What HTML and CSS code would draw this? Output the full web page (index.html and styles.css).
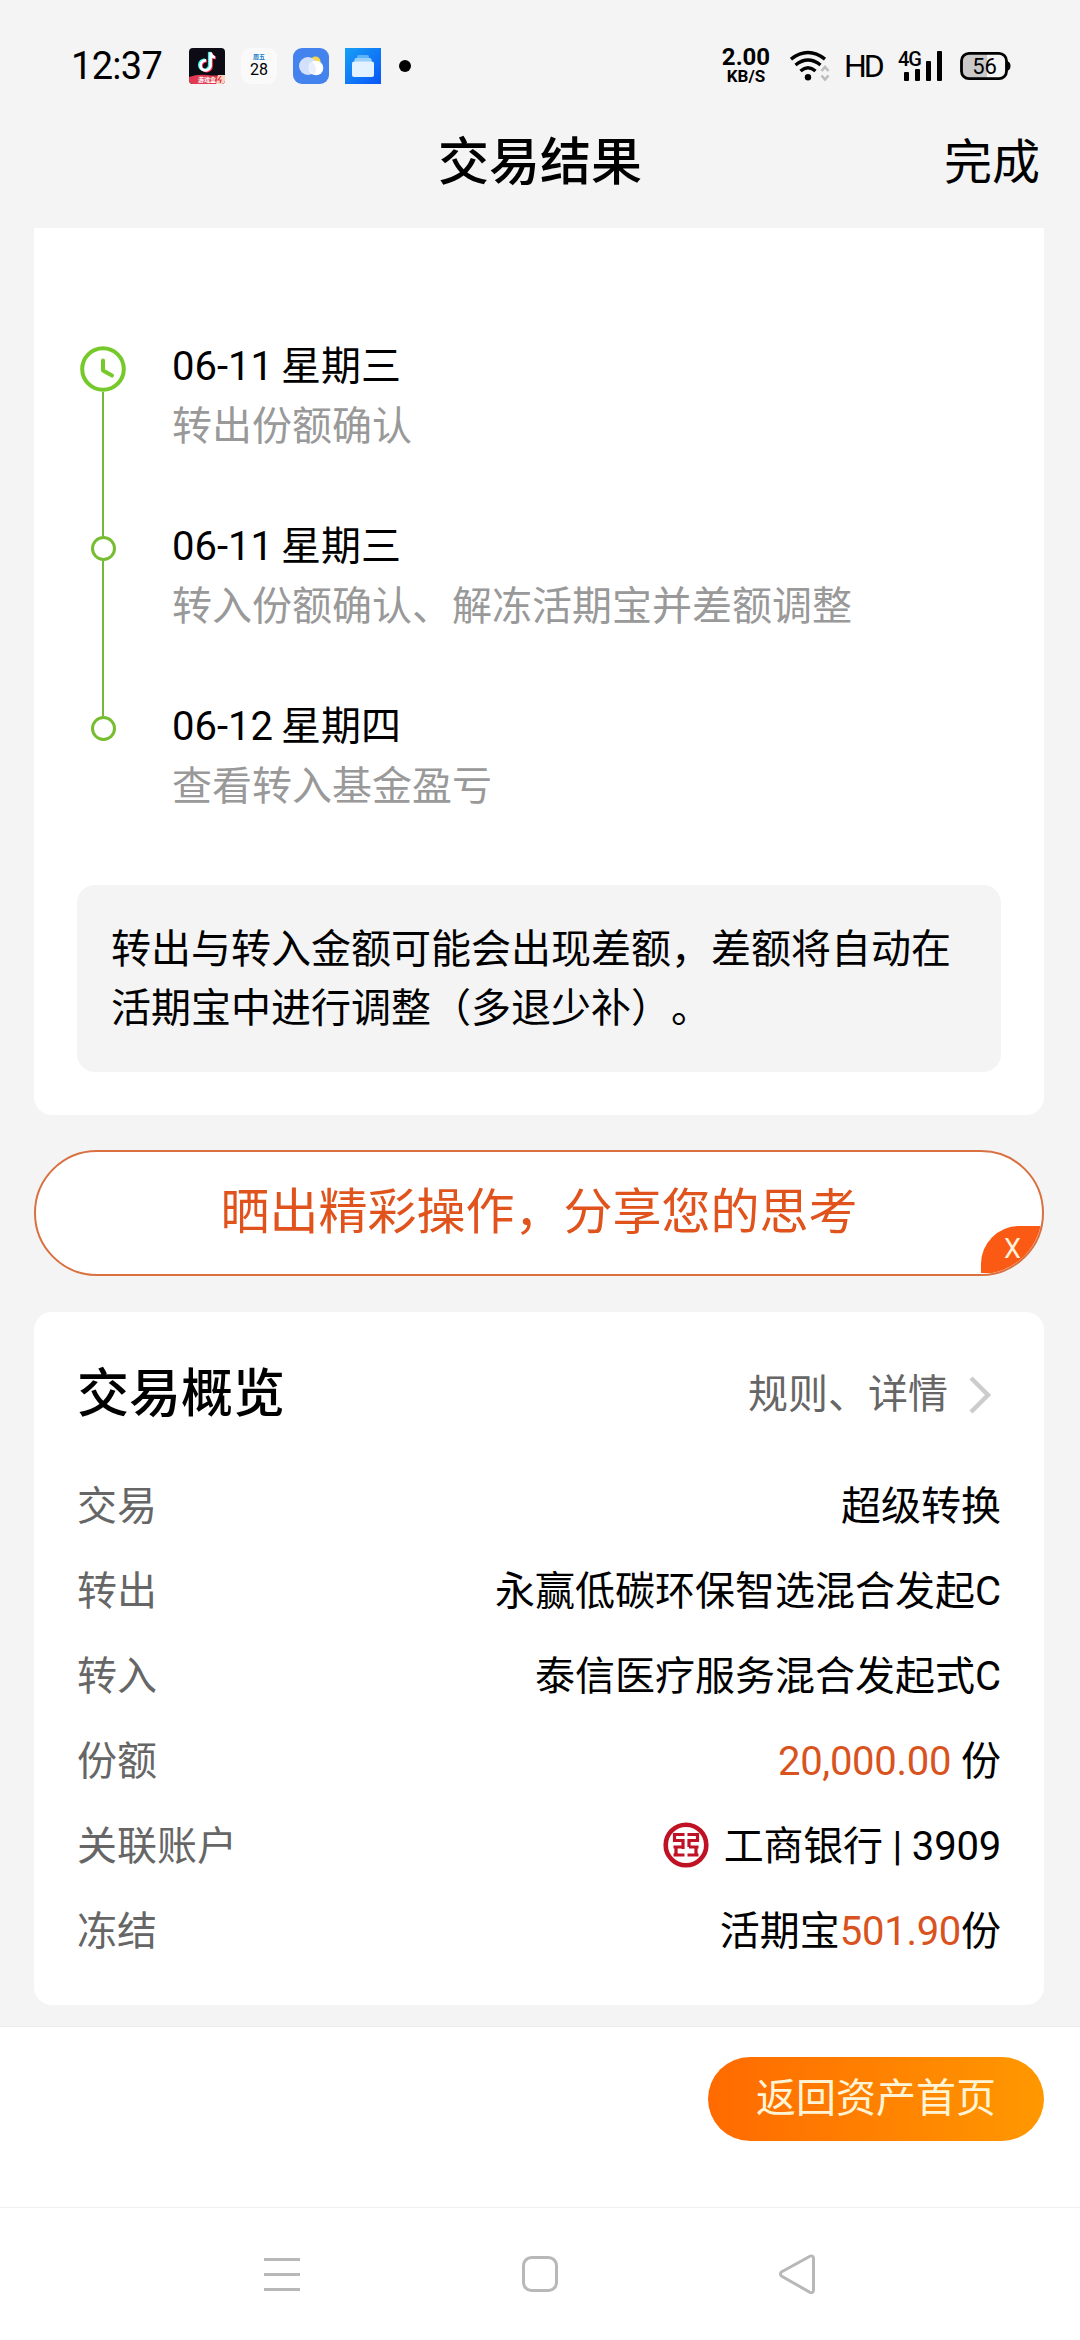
FILE: index.html
```html
<!DOCTYPE html>
<html lang="zh-CN">
<head>
  <meta charset="UTF-8" />
  <meta name="viewport" content="width=device-width, initial-scale=1.0"/>
  <title>交易结果</title>
  <link rel="stylesheet" href="styles.css">
</head>
<body>
  <div class="status-bar">
    <span class="time">12:37</span>
    <div class="app-icons">
      <svg width="36" height="36" viewBox="0 0 36 36">
        <rect width="36" height="36" rx="4" fill="#0d0b14"/>
        <g fill="none" stroke-width="2.8">
          <path d="M17 12.500a5 5 0 1 0 4.500 5V4.500c.4 3 2 4.500 4.500 4.900" stroke="#25f4ee" transform="translate(-1.200 -.6)"/>
          <path d="M17 12.500a5 5 0 1 0 4.500 5V4.500c.4 3 2 4.500 4.500 4.900" stroke="#fe2c55" transform="translate(1 .6)"/>
          <path d="M17 12.500a5 5 0 1 0 4.500 5V4.500c.4 3 2 4.500 4.500 4.900" stroke="#fff"/>
        </g>
        <path d="M0 29Q8 26 18 27T36 27V32a4 4 0 0 1-4 4H4a4 4 0 0 1-4-4z" fill="#e23a50"/>
        <path d="M29 27h7v5a4 4 0 0 1-4 4h-5z" fill="#fbd3c0"/>
        <path d="M32 28l-3 4h3l-1 3" fill="none" stroke="#e2304a" stroke-width="1.200"/>
        <text x="9" y="34" class="tiny-label">游戏盒</text>
      </svg>
      <div class="calendar"><span class="week">周五</span><span class="day">28</span></div>
      <svg width="36" height="36" viewBox="0 0 36 36">
        <rect width="36" height="36" rx="9" fill="#4482ee"/>
        <circle cx="22.500" cy="13.500" r="5" fill="#f7d84a"/>
        <circle cx="15" cy="18" r="9" fill="#d3e0fb"/>
        <circle cx="23" cy="20" r="7.300" fill="#fff"/>
        <path d="M18 13.500a9 9 0 0 1 4 12.500a7.300 7.300 0 0 1-4-12.500z" fill="#e9f0fd"/>
      </svg>
      <svg width="36" height="36" viewBox="0 0 36 36">
        <defs>
          <linearGradient id="folderBg" x1="0" y1="0" x2="1" y2="1">
            <stop offset="0" stop-color="#17a0f5"/><stop offset="1" stop-color="#0a56f8"/>
          </linearGradient>
        </defs>
        <rect width="36" height="36" fill="url(#folderBg)"/>
        <rect x="12" y="7" width="12" height="5" rx="1.500" fill="#5cb4f8"/>
        <rect x="9.500" y="10" width="17" height="6" rx="1.500" fill="#98cffb"/>
        <rect x="7" y="13.500" width="22" height="15.500" rx="2" fill="#e4f1fe"/>
      </svg>
      <span class="dot"></span>
    </div>
    <div class="signals">
      <div class="speed"><span class="speed-num">2.00</span><span class="speed-unit">KB/S</span></div>
      <svg class="wifi" width="40" height="32" viewBox="0 0 40 32">
        <g fill="none" stroke="#000" stroke-width="3.400">
          <path d="M1 9.200Q18 -4 35 9.200"/>
          <path d="M5.500 15Q18 5 30.500 15"/>
          <path d="M10.500 21Q18 14.500 25.500 21"/>
        </g>
        <circle cx="18" cy="27.300" r="3.200"/>
        <path d="M31.500 21l3.500-4 3.500 4M31.500 25.500l3.500 4 3.500-4" fill="none" stroke="#bdbdbd" stroke-width="2.600"/>
      </svg>
      <span class="hd">HD</span>
      <div class="cell">
        <span class="net">4G</span>
        <svg width="46" height="32" viewBox="0 0 46 32">
          <rect x="6" y="22" width="5" height="9" rx="1"/>
          <rect x="17" y="19" width="5" height="12" rx="1"/>
          <rect x="28" y="11" width="5" height="20" rx="1"/>
          <rect x="39" y="1" width="5" height="30" rx="1"/>
        </svg>
      </div>
      <svg class="battery" width="51" height="30" viewBox="0 0 51 30">
        <path d="M9.500 2.500H27V27.500H9.500a7 7 0 0 1-7-7V9.500a7 7 0 0 1 7-7z" fill="#c9c9c9"/>
        <rect x="1.500" y="2.300" width="45" height="25.400" rx="7.500" fill="none" stroke="#000" stroke-width="2.800"/>
        <path d="M47 10q3.500 1 3.500 5t-3.500 5z"/>
        <text x="24.500" y="22.800" class="battery-num">56</text>
      </svg>
    </div>
  </div>

  <header class="header">
    <span></span>
    <h1>交易结果</h1>
    <a class="done">完成</a>
  </header>

  <main class="content">
    <section class="card progress">
      <div class="timeline">
        <div class="rail">
          <svg width="46" height="46" viewBox="0 0 46 46">
            <circle cx="23" cy="23" r="20.800" fill="none" stroke="#76c92b" stroke-width="4"/>
            <path d="M23 14.500V24.500L32 29.500" fill="none" stroke="#76c92b" stroke-width="4" stroke-linecap="round" stroke-linejoin="round"/>
          </svg>
          <span class="line"></span>
          <span class="node"></span>
          <span class="line line-long"></span>
          <span class="node"></span>
        </div>
        <ul class="steps">
          <li><p class="date">06-11 星期三</p><p class="desc">转出份额确认</p></li>
          <li><p class="date">06-11 星期三</p><p class="desc">转入份额确认、解冻活期宝并差额调整</p></li>
          <li><p class="date">06-12 星期四</p><p class="desc">查看转入基金盈亏</p></li>
        </ul>
      </div>
      <p class="notice">转出与转入金额可能会出现差额，差额将自动在活期宝中进行调整（多退少补）。</p>
    </section>

    <div class="share">
      <span>晒出精彩操作，分享您的思考</span>
      <button class="share-close">X</button>
    </div>

    <section class="card overview">
      <div class="overview-head">
        <h2>交易概览</h2>
        <a class="more">规则、详情
          <svg width="24" height="40" viewBox="0 0 24 40"><path d="M3 3L20 20L3 37" fill="none" stroke="#ccc" stroke-width="4.500"/></svg>
        </a>
      </div>
      <div class="row"><span class="label">交易</span><span>超级转换</span></div>
      <div class="row"><span class="label">转出</span><span>永赢低碳环保智选混合发起C</span></div>
      <div class="row"><span class="label">转入</span><span>泰信医疗服务混合发起式C</span></div>
      <div class="row"><span class="label">份额</span><span><em>20,000.00</em> 份</span></div>
      <div class="row">
        <span class="label">关联账户</span>
        <span class="bank">
          <svg width="46" height="46" viewBox="0 0 46 46">
            <circle cx="23" cy="23" r="20.300" fill="none" stroke="#c01225" stroke-width="4.600"/>
            <g fill="none" stroke="#c01225" stroke-width="3.200">
              <path d="M21.500 12.500H11.500V18.500H20V25M10.500 25H20M10.500 33H21.500M13 33V31M20 25V27"/>
              <path d="M24.500 12.500H34.500V18.500H26V25M35.500 25H26M35.500 33H24.500M13 25V33M33 25V33"/>
            </g>
          </svg>
          工商银行 | 3909
        </span>
      </div>
      <div class="row"><span class="label">冻结</span><span>活期宝<em>501.90</em>份</span></div>
    </section>
  </main>

  <footer class="footer">
    <button class="home-btn">返回资产首页</button>
  </footer>

  <nav class="nav-bar">
    <svg width="40" height="44" viewBox="0 0 40 44"><path d="M2 7.500H38M2 22.500H38M2 37.500H38" stroke="#b8b8b8" stroke-width="3"/></svg>
    <svg width="40" height="44" viewBox="0 0 40 44"><rect x="3.500" y="5.500" width="33" height="33" rx="8" fill="none" stroke="#b8b8b8" stroke-width="3"/></svg>
    <svg width="40" height="44" viewBox="0 0 40 44"><path d="M32 4.200L3.800 19.800Q1 22 3.800 24.300L32 40.300Q35.500 41.500 35.500 38V6.500Q35.500 3 32 4.200z" fill="none" stroke="#b8b8b8" stroke-width="3"/></svg>
  </nav>
</body>
</html>
```
FILE: styles.css
```css
* { box-sizing: border-box; }
body {
  margin: 0; height: 2340px;
  display: flex; flex-direction: column;
  font-family: Roboto, "Noto Sans CJK SC", sans-serif;
  font-size: 40px; line-height: 60px;
  text-spacing-trim: space-all;
  color: #000; background-color: #f4f4f4;
}
h1, h2, p, ul { margin: 0; padding: 0; }
ul { list-style: none; }
em { font-style: normal; color: #d9531e; letter-spacing: -0.3px; }
svg { display: block; flex: none; }
button { border: none; padding: 0; font-family: inherit; }

/* status bar */
.status-bar {
  height: 88px; padding: 44px 69px 0 71px;
  display: flex; align-items: center; flex: none;
}
.time { width: 118px; font-size: 38px; line-height: 44px; letter-spacing: -0.7px; }
.app-icons { display: flex; align-items: center; gap: 16px; }
.calendar {
  width: 36px; height: 36px; border-radius: 9px; background-color: #fafafa;
  display: flex; flex-direction: column; align-items: center;
}
.week { font-size: 6px; line-height: 8px; font-weight: bold; color: #1a80c8; margin-top: 5px; }
.day { font-size: 16px; line-height: 17px; }
.tiny-label { font-size: 6px; fill: #fff; font-weight: bold; }
.dot { width: 12px; height: 12px; border-radius: 50%; background-color: #000; margin-left: 2px; }
.signals { margin-left: auto; display: flex; align-items: center; }
.speed {
  width: 50px; display: flex; flex-direction: column; align-items: center;
  font-weight: 700;
}
.speed-num { font-size: 24px; line-height: 20px; }
.speed-unit { font-size: 17px; line-height: 18px; }
.wifi { margin-left: 19px; }
.hd { font-size: 32px; line-height: 40px; margin-left: 14px; letter-spacing: -3px; width: 40px; }
.cell { position: relative; margin-left: 14px; width: 46px; }
.net { position: absolute; left: 0; top: -1px; font-size: 20px; line-height: 20px; letter-spacing: -1px; font-weight: 500; }
.battery { margin-left: 16px; }
.battery-num { font-size: 22px; text-anchor: middle; }

/* page title */
.header {
  height: 140px; padding: 9px 40px 0; flex: none;
  display: grid; grid-template-columns: 1fr auto 1fr; align-items: center;
}
.header h1 { font-size: 51px; font-weight: 500; line-height: 80px; }
.done { font-size: 48px; line-height: 80px; justify-self: end; }

.content { padding: 0 36px 0 34px; flex: none; }
.card { background-color: #fff; border-radius: 18px; }

/* progress */
.progress { height: 887px; padding: 107px 43px 0; border-top-left-radius: 0; border-top-right-radius: 0; }
.timeline { display: flex; height: 550px; }
.rail { width: 52px; padding-top: 11px; display: flex; flex-direction: column; align-items: center; }
.line { width: 2px; height: 144px; background-color: #76b83a; }
.line-long { height: 155px; }
.node { width: 25px; height: 25px; border: 3px solid #76bd30; border-radius: 50%; }
.steps { margin-left: 43px; padding-top: 2px; }
.steps li { height: 180px; }
.date { word-spacing: -2px; }
.desc { color: #999; }
.notice {
  height: 187px; padding: 35px 34px; line-height: 59px;
  background-color: #f4f4f4; border-radius: 18px;
}

/* share banner */
.share {
  position: relative; height: 126px; margin: 35px 0 36px;
  border: 2px solid #d9703f; border-radius: 63px; background-color: #fff;
  display: flex; align-items: center; justify-content: center; overflow: hidden;
  font-size: 49px; color: #e0531c;
}
.share-close {
  position: absolute; right: 0; bottom: 1px; width: 61px; height: 47px;
  padding: 0 0 0 2px; border-radius: 38px 0 0 0;
  background-color: #fa5a14; color: #fff3dc; font-size: 27px; line-height: 47px;
}

/* overview */
.overview { height: 693px; padding: 43px 43px 0; }
.overview-head { height: 109px; display: flex; justify-content: space-between; align-items: flex-start; line-height: 80px; }
.overview-head h2 { font-size: 52px; font-weight: 500; }
.more { display: flex; align-items: center; color: #666; padding-right: 9px; gap: 20px; }
.row { height: 85px; display: flex; justify-content: space-between; align-items: center; }
.label { color: #666; }
.bank { display: flex; align-items: center; gap: 15px; letter-spacing: -0.2px; }
.bank svg { margin-bottom: 4px; }

/* bottom button */
.footer {
  height: 181px; margin-top: 21px; padding: 30px 36px 0; flex: none;
  background-color: #fff; border-top: 1px solid #ececec;
  display: flex; justify-content: flex-end; align-items: flex-start;
}
.home-btn {
  width: 336px; height: 84px; border-radius: 42px;
  background: linear-gradient(90deg, #ff6a00, #ff9800);
  color: #fff5d6; font-size: 40px; line-height: 84px;
}

.nav-bar {
  flex: 1; padding: 0 262px; background-color: #fff; border-top: 1px solid #f0f0f0;
  display: flex; justify-content: space-between; align-items: center;
}
```
